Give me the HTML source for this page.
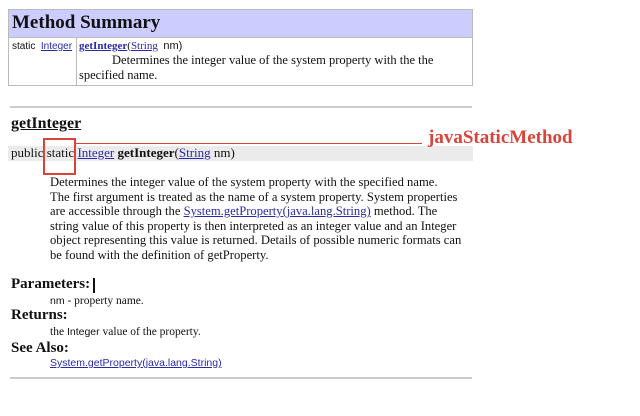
<!DOCTYPE html>
<html><head><style>
body{margin:0;width:640px;height:416px;background:#fff;position:relative;overflow:hidden;font-family:"Liberation Serif",serif;color:#111}
.a{position:absolute;white-space:nowrap}
a{color:#2a2aa8;text-decoration:underline}
.s{font-family:"Liberation Sans",sans-serif}
</style></head><body>
<div class="a" style="left:8px;top:9px;width:465px;height:77px;border:1px solid #bbb;box-sizing:border-box"></div>
<div class="a" style="left:9px;top:10px;width:463px;height:27px;background:#ccccff;border-bottom:1px solid #bbb"></div>
<div class="a" style="left:12px;top:12px;font-size:19px;font-weight:bold">Method Summary</div>
<div class="a" style="left:76px;top:37px;width:1px;height:48px;background:#bbb"></div>
<div class="a s" style="left:12px;top:41px;font-size:10px">static&nbsp; <a>Integer</a></div>
<div class="a" style="left:79px;top:40px;font-size:11px"><a style="font-weight:bold">getInteger</a>(<a>String</a>&nbsp; <span class="s">nm)</span></div>
<div class="a" style="left:112px;top:53px;font-size:12.5px">Determines the integer value of the system property with the the</div>
<div class="a" style="left:79px;top:68px;font-size:12.5px">specified name.</div>
<div class="a" style="left:10px;top:106px;width:462px;height:2px;background:#ccc"></div>
<div class="a" style="left:11px;top:115px;font-size:16px;font-weight:bold;text-decoration:underline">getInteger</div>
<div class="a" style="left:8px;top:146px;width:465px;height:15px;background:#ebebeb"></div>
<div class="a" style="left:11px;top:145px;font-size:13px">public static <a>Integer</a> <b>getInteger</b>(<a>String</a> nm)</div>
<div class="a" style="left:43px;top:138px;width:29px;height:33px;border:2px solid #d9443a"></div>
<div class="a" style="left:74px;top:143px;width:348px;height:1px;background:#d9443a"></div>
<div class="a" style="left:428px;top:127px;font-size:19px;font-weight:bold;color:#d9443a">javaStaticMethod</div>
<div class="a" style="left:50px;top:175px;font-size:12.6px;line-height:14.6px">Determines the integer value of the system property with the specified name.<br>The first argument is treated as the name of a system property. System properties<br>are accessible through the <a>System.getProperty(java.lang.String)</a> method. The<br>string value of this property is then interpreted as an integer value and an Integer<br>object representing this value is returned. Details of possible numeric formats can<br>be found with the definition of getProperty.</div>
<div class="a" style="left:11px;top:276px;font-size:15px;font-weight:bold">Parameters:</div>
<div class="a" style="left:93px;top:278px;width:2px;height:15px;background:#111"></div>
<div class="a" style="left:50px;top:295px;font-size:11.5px"><span class="s" style="font-size:10.5px">nm</span> - property name.</div>
<div class="a" style="left:11px;top:307px;font-size:15px;font-weight:bold">Returns:</div>
<div class="a" style="left:50px;top:326px;font-size:11.5px">the <span class="s" style="font-size:10.5px">Integer</span> value of the property.</div>
<div class="a" style="left:11px;top:340px;font-size:15px;font-weight:bold">See Also:</div>
<div class="a s" style="left:50px;top:357px;font-size:10.5px"><a>System.getProperty(java.lang.String)</a></div>
<div class="a" style="left:10px;top:377px;width:462px;height:2px;background:#ccc"></div>
</body></html>
